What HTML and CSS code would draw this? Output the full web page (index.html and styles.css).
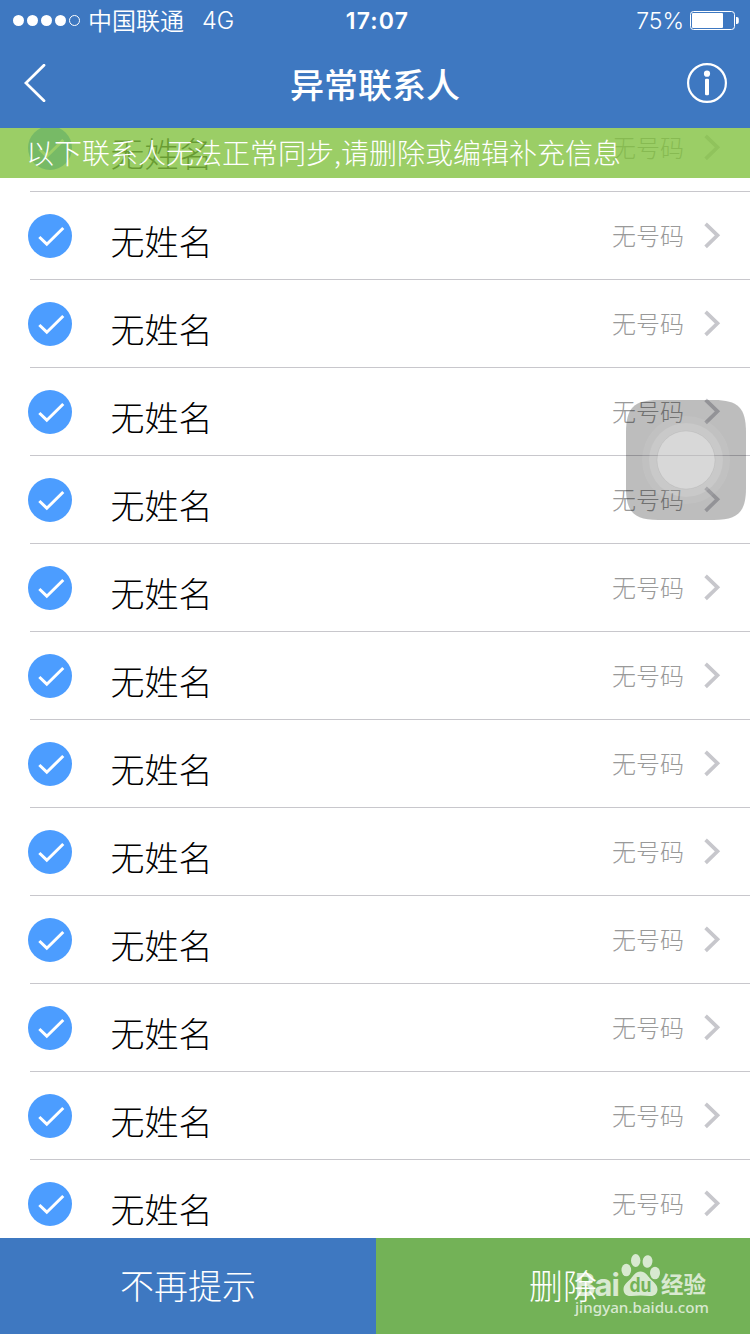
FILE: index.html
```html
<!DOCTYPE html>
<html lang="zh-CN">
<head>
<meta charset="utf-8">
<title>异常联系人</title>
<link rel="stylesheet" href="styles.css">
</head>
<body>
<svg class="defs" width="0" height="0" aria-hidden="true">
  <symbol id="check" viewBox="0 0 44 44"><circle cx="22" cy="22" r="22" fill="#4c9dff"/><path d="M12.400 24 L18.800 30.200 L34.200 15" fill="none" stroke="#fff" stroke-width="3" stroke-linecap="square" stroke-linejoin="miter"/></symbol>
  <symbol id="chevron" viewBox="0 0 17 27"><path d="M1.600 1.800 L13.500 13.300 L1.600 24.800" fill="none" stroke="#c7c7cc" stroke-width="3.700"/></symbol>
</svg>
<div class="screen">
  <header class="header">
    <div class="status">
      <div class="status-left">
        <svg class="signal" width="68" height="12" viewBox="0 0 68 12"><g fill="#fff"><circle cx="6.500" cy="6.500" r="5.500"/><circle cx="20.500" cy="6.500" r="5.500"/><circle cx="34.500" cy="6.500" r="5.500"/><circle cx="48.500" cy="6.500" r="5.500"/></g><circle cx="62.500" cy="6.500" r="5" fill="none" stroke="#fff"/></svg>
        <span class="carrier">中国联通</span>
        <span class="network">4G</span>
      </div>
      <span class="clock">17:07</span>
      <div class="status-right">
        <span class="percent">75%</span>
        <svg width="49" height="19" viewBox="0 0 49 19"><rect x=".5" y=".5" width="44" height="18" rx="3" fill="none" stroke="#fff"/><rect x="2" y="2" width="31" height="15" rx="1" fill="#fff"/><path d="M46 6h.8a2 2 0 0 1 2 2v3a2 2 0 0 1-2 2H46z" fill="#fff"/></svg>
      </div>
    </div>
    <div class="navbar">
      <svg width="22" height="38" viewBox="0 0 22 38"><path d="M20 1.200 L1.900 19 L20 36.800" fill="none" stroke="#fff" stroke-width="2.800" stroke-linecap="round"/></svg>
      <h1 class="title">异常联系人</h1>
      <svg width="40" height="40" viewBox="0 0 40 40"><circle cx="20" cy="20" r="18.900" fill="none" stroke="#fff" stroke-width="2.200"/><circle cx="20" cy="10.700" r="3.100" fill="#fff"/><rect x="18" y="15.700" width="4" height="16.600" rx="1.300" fill="#fff"/></svg>
    </div>
  </header>
  <main class="content">
    <ul class="list" id="list">
    </ul>
    <p class="notice">以下联系人无法正常同步,请删除或编辑补充信息</p>
  </main>
  <footer class="actions">
    <button class="action dismiss">不再提示</button>
    <button class="action delete">删除</button>
  </footer>
  <div class="assistive">
    <svg width="120" height="120" viewBox="0 0 120 120"><path d="M0 32C0 8 8 0 32 0H88C112 0 120 8 120 32V88C120 112 112 120 88 120H32C8 120 0 112 0 88Z" fill="#000" fill-opacity=".26"/><g fill="#fff"><circle cx="60" cy="60" r="44" fill-opacity=".07"/><circle cx="60" cy="60" r="37" fill-opacity=".13"/><circle cx="60" cy="60" r="29" fill-opacity=".28" stroke="#000" stroke-opacity=".05"/></g></svg>
  </div>
  <div class="watermark">
    <div class="brand">
      <span class="brand-bai">Bai</span>
      <svg width="40" height="44" viewBox="0 0 40 44"><g fill="#fff"><ellipse cx="5.300" cy="16" rx="4.800" ry="6.300"/><ellipse cx="14.700" cy="6.500" rx="4.700" ry="6.500"/><ellipse cx="26.500" cy="7.500" rx="4.900" ry="6.300" transform="rotate(8 26.500 7.500)"/><ellipse cx="34" cy="19" rx="5" ry="6.300"/><path d="M19.500 17.500c5 0 7 4 9.500 7 4 4 7.500 6 7.500 11 0 4-3 7-8 6.500-6-.7-12-.7-18 0-5 .5-8-2.500-8-6.500 0-5 3.500-7 7.500-11 2.500-3 4.500-7 9.500-7z"/></g><text class="brand-du" x="19.500" y="38" text-anchor="middle" textLength="22" lengthAdjust="spacingAndGlyphs">du</text></svg>
      <span class="brand-cn">经验</span>
    </div>
    <span class="site">jingyan.baidu.com</span>
  </div>
</div>
<script src="list.js"></script>
</body>
</html>
```
FILE: list.js
```js
const contacts = Array.from({ length: 13 }, () => ({ name: '无姓名', phone: '无号码' }));
document.getElementById('list').innerHTML = contacts.map(c => `
  <li class="row">
    <svg class="check" width="44" height="44"><use href="#check"/></svg>
    <div class="row-body">
      <span class="name">${c.name}</span>
      <span class="phone">${c.phone}</span>
      <svg class="chevron" width="17" height="27"><use href="#chevron"/></svg>
    </div>
  </li>`).join('');
```
FILE: styles.css
```css
* { box-sizing: border-box; margin: 0; padding: 0; }
body { background: #fff; font-family: "Noto Sans CJK SC", sans-serif; }
svg { display: block; flex: none; }
.defs { position: absolute; }
.screen { position: relative; width: 750px; height: 1334px; display: flex; flex-direction: column; overflow: hidden; }
.header { height: 128px; background: #3e78c1; color: #fff; flex: none; }
.status { height: 40px; display: grid; grid-template-columns: 1fr auto 1fr; align-items: center; padding: 0 11px 0 12px; font-size: 24px; line-height: 40px; }
.status-left, .status-right { display: flex; align-items: center; }
.status-right { justify-content: flex-end; gap: 6px; }
.signal { overflow: visible; }
.carrier { margin-left: 8px; font-weight: 350; }
.network, .clock, .percent { font-family: Inter, sans-serif; padding-top: 2px; line-height: 38px; }
.network { margin-left: 18px; font-size: 23.500px; font-weight: 350; }
.clock { font-weight: 600; font-size: 23px; letter-spacing: 1.200px; padding-left: 4px; }
.percent { font-size: 23px; font-weight: 350; }
.navbar { height: 88px; display: flex; align-items: center; justify-content: space-between; padding: 0 23px 2px 24px; }
.title { font-size: 34px; font-weight: 500; line-height: 50px; padding: 1px 0 0 17px; }
.content { position: relative; flex: 1; overflow: hidden; }
.list { list-style: none; margin-top: -24px; }
.row { height: 88px; display: flex; align-items: center; padding-left: 28px; background: linear-gradient(#c8c7cc, #c8c7cc) 30px 87px / 720px 1px no-repeat; }
.row-body { flex: 1; display: flex; align-items: center; padding: 0 29px 0 38px; }
.name { flex: 1; font-size: 34px; font-weight: 300; line-height: 50px; padding: 10px 0 0 .5px; color: #000; }
.phone { font-size: 24px; font-weight: 300; line-height: 36px; padding-bottom: 2px; color: #999; margin-right: 20px; }
.chevron { margin-bottom: 2px; }
.notice { position: absolute; top: 0; left: 0; width: 100%; height: 50px; padding-left: 26px; font-size: 28px; font-weight: 300; line-height: 49px; color: #fff; background: rgba(130, 194, 64, .8); white-space: nowrap; }
.actions { height: 96px; flex: none; display: flex; }
.action { flex: 1; border: 0; color: #fff; font: 300 34px/94px "Noto Sans CJK SC", sans-serif; padding-bottom: 2px; }
.dismiss { background: #3e78c1; flex: 0 0 376px; }
.delete { background: #73b257; }
.assistive { position: absolute; left: 626px; top: 400px; }
.watermark { position: absolute; left: 575px; top: 1254px; width: 134px; color: #fff; opacity: .72; }
.brand { display: flex; align-items: flex-end; height: 44px; }
.brand-bai { width: 46px; font: 700 31px/35px Inter, sans-serif; letter-spacing: -1px; padding-bottom: 0; margin-bottom: -4px; }
.brand-du { font: 700 20px Inter, sans-serif; fill: #73b257; }
.brand-cn { font-size: 22.500px; font-weight: 700; line-height: 26px; padding-bottom: 2px; }
.site { display: block; font: 500 15.200px/19px "Noto Sans", sans-serif; white-space: nowrap; }
```
